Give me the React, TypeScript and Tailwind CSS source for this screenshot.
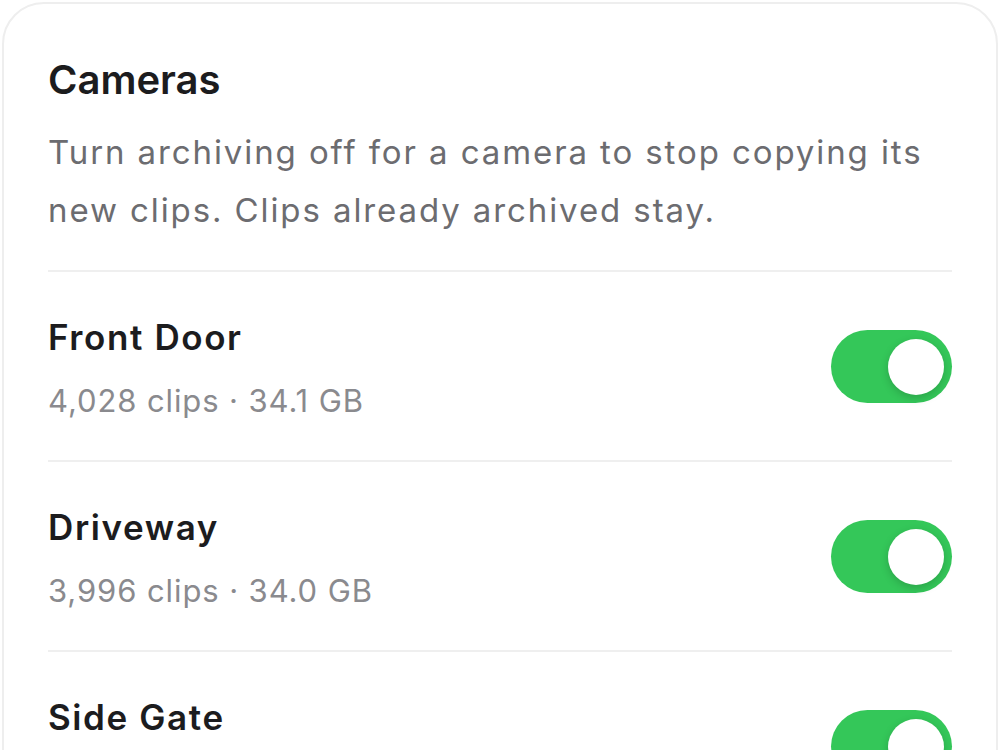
import { useState } from "react";

interface Camera {
  name: string;
  clips: string;
  size: string;
}

const cameras: Camera[] = [
  { name: "Front Door", clips: "4,028", size: "34.1 GB" },
  { name: "Driveway", clips: "3,996", size: "34.0 GB" },
  { name: "Side Gate", clips: "3,870", size: "33.2 GB" },
];

function Toggle({ on, onChange }: { on: boolean; onChange: () => void }) {
  return (
    <button
      type="button"
      onClick={onChange}
      className={`relative h-[73px] w-[121px] shrink-0 rounded-full transition-colors ${
        on ? "bg-[#34c759]" : "bg-[#e9e9ea]"
      }`}
    >
      <span
        className={`absolute top-[9px] h-[56px] w-[56px] rounded-full bg-white shadow-[0_3px_8px_rgba(0,0,0,0.18)] transition-all ${
          on ? "left-[57px]" : "left-[8px]"
        }`}
      />
    </button>
  );
}

export default function App() {
  const [enabled, setEnabled] = useState<boolean[]>(cameras.map(() => true));

  return (
    <div className="min-h-screen bg-white p-[2px] font-['Inter',sans-serif]">
      <div className="rounded-[42px] border-2 border-[#eeeeee] bg-white px-[44px] pt-[50px]">
        <h2 className="text-[40px] font-semibold leading-[52px] text-[#1c1c1e]">Cameras</h2>
        <p className="mt-[17px] text-[33px] leading-[58px] tracking-[1.9px] text-[#6c6c70]">
          Turn archiving off for a camera to stop copying its new clips. Clips already archived stay.
        </p>
        <div className="mt-[31px] h-[2px] bg-[#efefef]" />
        {cameras.map((cam, i) => (
          <div key={cam.name}>
            <div className="flex h-[188px] items-center justify-between">
              <div>
                <div className="text-[35px] font-semibold leading-[50px] tracking-[1.6px] text-[#1c1c1e]">
                  {cam.name}
                </div>
                <div className="mt-[19px] text-[31px] leading-[40px] tracking-[0.9px] text-[#8a8a8e]">
                  {cam.clips} clips · {cam.size}
                </div>
              </div>
              <Toggle
                on={enabled[i]}
                onChange={() => setEnabled((prev) => prev.map((v, j) => (j === i ? !v : v)))}
              />
            </div>
            <div className="h-[2px] bg-[#efefef]" />
          </div>
        ))}
      </div>
    </div>
  );
}
